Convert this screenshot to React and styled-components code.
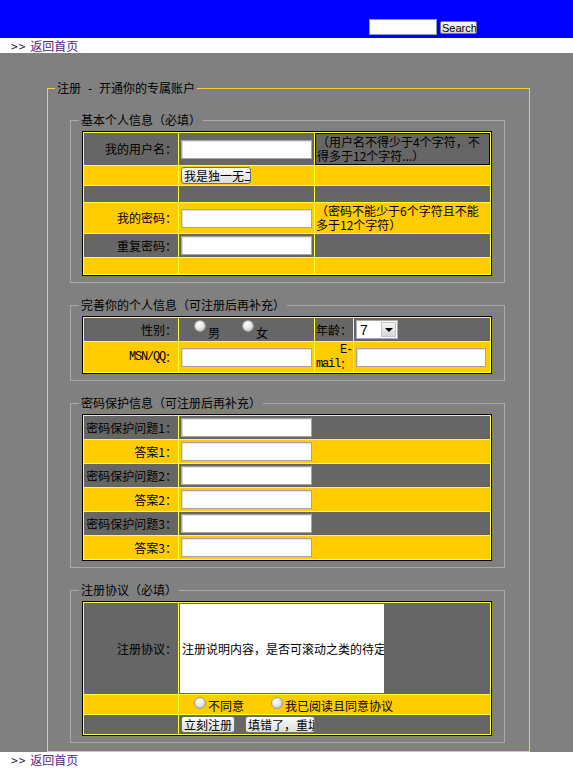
import { Fragment } from "react";
import styled, { createGlobalStyle } from "styled-components";

const GlobalStyle = createGlobalStyle`
  html, body {
    margin: 0;
    padding: 0;
    background: #fff;
  }
  body {
    font-family: "Noto Sans CJK SC", "Liberation Sans", sans-serif;
    font-size: 12px;
    line-height: 14px;
    color: #000;
  }
`;

const Header = styled.header`
  box-sizing: border-box;
  height: 38px;
  padding: 19px 96px 0 0;
  display: flex;
  justify-content: flex-end;
  align-items: flex-start;
  gap: 3px;
  background: #0000ff;
`;

const SearchInput = styled.input`
  box-sizing: border-box;
  width: 68px;
  height: 16px;
  margin: 0;
  padding: 0 2px;
  border: 1px solid #8c9cb8;
  background: #fff;
`;

const SearchButton = styled.button`
  box-sizing: border-box;
  width: 37px;
  height: 13px;
  margin: 2px 0 0;
  padding: 0 0 0 1px;
  border: 1px solid #7a7a7a;
  border-radius: 2px;
  background: linear-gradient(#fafafa, #d8d8d8);
  font: 11px/13px "Liberation Sans", Arial, sans-serif;
  color: #000;
  text-align: left;
  white-space: nowrap;
  overflow: hidden;
`;

const NavBar = styled.div`
  height: ${({ $tall }) => ($tall ? "16px" : "15px")};
  padding-left: 11px;
  display: flex;
  align-items: center;
  gap: 4px;
  background: #fff;
`;

const Arrows = styled.span`
  color: #1a1a40;
  letter-spacing: 1px;
`;

const HomeLink = styled.a`
  color: #551a8b;
  text-decoration: none;
`;

const Main = styled.main`
  padding-top: 28px;
  background: #808080;
`;

const OuterSet = styled.fieldset`
  box-sizing: border-box;
  width: 483px;
  margin: 0 0 0 47px;
  padding: 18px 24px 8px 7px;
  border: 1px solid #ffcc33;
`;

const OuterLegend = styled.legend`
  padding: 0 2px;
  line-height: 14px;
`;

const Dash = styled.span`
  display: inline-block;
  width: 18px;
  text-align: center;
`;

const Section = styled.fieldset`
  box-sizing: border-box;
  width: 435px;
  margin: 0 0 15px 15px;
  padding: 4px 0 6px 11px;
  border: 1px solid #a9a9a9;

  &:last-child {
    margin-bottom: 0;
  }
`;

const SectionLegend = styled.legend`
  margin-left: -3px;
  padding: 0 2px;
  line-height: 14px;
`;

const FormGrid = styled.div`
  box-sizing: border-box;
  width: 410px;
  display: grid;
  grid-template-columns: ${({ $cols }) => $cols};
  gap: 1px;
  padding: 1px;
  border: 1px solid #000;
  background: #ffff33;
`;

const Cell = styled.div`
  box-sizing: border-box;
  min-height: 16px;
  padding: 1px;
  display: flex;
  align-items: center;
  justify-content: ${({ $align }) => ($align === "right" ? "flex-end" : "flex-start")};
  text-align: ${({ $align }) => $align || "left"};
  background: ${({ $tone }) => ($tone === "gold" ? "#ffcc00" : "#666666")};
  ${({ $boxed }) => $boxed && "border: 1px solid #000;"}
`;

const Mono = styled.span`
  font-family: "Liberation Mono", "Courier New", monospace;
  letter-spacing: -1.2px;
  line-height: 14px;
  vertical-align: top;
`;

const TextField = styled.input`
  box-sizing: border-box;
  width: ${({ $w }) => $w || 131}px;
  height: 19px;
  margin: 1px;
  padding: 0 2px;
  border: 1px solid #a4a4a4;
  box-shadow: inset 1px 1px 0 #e2e2e2;
  background: #fff;
  font: inherit;
`;

const PushButton = styled.button`
  box-sizing: border-box;
  width: ${({ $w }) => ($w ? `${$w}px` : "auto")};
  height: 17px;
  margin: 0 1px;
  padding: 0 2px;
  border: 1px solid #6f6f6f;
  border-radius: 3px;
  background: linear-gradient(#fdfdfd, #dcdcdc);
  font: inherit;
  line-height: 15px;
  color: #000;
  text-align: left;
  white-space: nowrap;
  overflow: hidden;
`;

const ButtonRow = styled.div`
  display: flex;
  gap: 8px;
`;

const Choices = styled.div`
  display: flex;
  align-items: center;
  gap: ${({ $gap }) => $gap}px;
  padding-left: 14px;
`;

const Choice = styled.label`
  display: flex;
  align-items: center;
  gap: 2px;
`;

const Radio = styled.input.attrs({ type: "radio" })`
  appearance: none;
  box-sizing: border-box;
  width: 12px;
  height: 12px;
  margin: 0 0 ${({ $offset }) => $offset}px;
  border: 1px solid #9a9a9a;
  border-radius: 50%;
  background: radial-gradient(circle at 40% 35%, #fff 0, #ececec 40%, #b4b4b4 100%);
`;

const ChoiceText = styled.span`
  margin-top: ${({ $offset }) => $offset}px;
`;

const SelectBox = styled.div`
  box-sizing: border-box;
  width: 42px;
  height: 19px;
  margin: 1px;
  display: flex;
  align-items: center;
  border: 1px solid #a5acb2;
  background: #fff;
`;

const SelectField = styled.select`
  appearance: none;
  flex: 1;
  min-width: 0;
  height: 100%;
  padding: 0 0 0 3px;
  border: none;
  background: transparent;
  font: 14px "Liberation Sans", Arial, sans-serif;
  color: #000;
`;

const SelectArrow = styled.span`
  box-sizing: border-box;
  width: 15px;
  height: 15px;
  margin-right: 1px;
  display: flex;
  align-items: center;
  justify-content: center;
  border: 1px solid #c4c4c4;
  background: linear-gradient(#f6f6f6, #d6d6d6);

  &::after {
    content: "";
    border-left: 4px solid transparent;
    border-right: 4px solid transparent;
    border-top: 4px solid #000;
    margin-top: 1px;
  }
`;

const AgreementBox = styled.div`
  box-sizing: border-box;
  width: 204px;
  height: 89px;
  padding-left: 2px;
  display: flex;
  align-items: center;
  background: #fff;
  white-space: nowrap;
  overflow: hidden;
`;

const securityRows = [
  ["密码保护问题1：", "dark"],
  ["答案1：", "gold"],
  ["密码保护问题2：", "dark"],
  ["答案2：", "gold"],
  ["密码保护问题3：", "dark"],
  ["答案3：", "gold"],
];

function App() {
  return (
    <>
      <GlobalStyle />
      <Header>
        <SearchInput type="text" />
        <SearchButton>Search</SearchButton>
      </Header>
      <NavBar>
        <Arrows>&gt;&gt;</Arrows>
        <HomeLink href="#">返回首页</HomeLink>
      </NavBar>

      <Main>
        <OuterSet>
          <OuterLegend>
            注册<Dash>-</Dash>开通你的专属账户
          </OuterLegend>

          <Section>
            <SectionLegend>基本个人信息（必填）</SectionLegend>
            <FormGrid $cols="94px 135px 1fr">
              <Cell $align="right">我的用户名：</Cell>
              <Cell>
                <TextField type="text" />
              </Cell>
              <Cell $boxed>（用户名不得少于4个字符，不得多于12个字符...）</Cell>

              <Cell $tone="gold" />
              <Cell $tone="gold">
                <PushButton $w={70}>我是独一无二</PushButton>
              </Cell>
              <Cell $tone="gold" />

              <Cell />
              <Cell />
              <Cell />

              <Cell $tone="gold" $align="right">我的密码：</Cell>
              <Cell $tone="gold">
                <TextField type="password" />
              </Cell>
              <Cell $tone="gold">（密码不能少于6个字符且不能多于12个字符）</Cell>

              <Cell $align="right">重复密码：</Cell>
              <Cell>
                <TextField type="password" />
              </Cell>
              <Cell />

              <Cell $tone="gold" />
              <Cell $tone="gold" />
              <Cell $tone="gold" />
            </FormGrid>
          </Section>

          <Section>
            <SectionLegend>完善你的个人信息（可注册后再补充）</SectionLegend>
            <FormGrid $cols="94px 135px 38px 1fr">
              <Cell $align="right">性别：</Cell>
              <Cell>
                <Choices $gap={22}>
                  <Choice>
                    <Radio name="sex" $offset={7} />
                    <ChoiceText $offset={7}>男</ChoiceText>
                  </Choice>
                  <Choice>
                    <Radio name="sex" $offset={7} />
                    <ChoiceText $offset={7}>女</ChoiceText>
                  </Choice>
                </Choices>
              </Cell>
              <Cell>年龄：</Cell>
              <Cell>
                <SelectBox>
                  <SelectField defaultValue="7">
                    <option value="7">7</option>
                  </SelectField>
                  <SelectArrow />
                </SelectBox>
              </Cell>

              <Cell $tone="gold" $align="right">
                <span>
                  <Mono>MSN/QQ</Mono>：
                </span>
              </Cell>
              <Cell $tone="gold">
                <TextField type="text" />
              </Cell>
              <Cell $tone="gold" $align="right">
                <span>
                  <Mono>E-mail</Mono>：
                </span>
              </Cell>
              <Cell $tone="gold">
                <TextField type="text" $w={130} />
              </Cell>
            </FormGrid>
          </Section>

          <Section>
            <SectionLegend>密码保护信息（可注册后再补充）</SectionLegend>
            <FormGrid $cols="94px 1fr">
              {securityRows.map(([label, tone]) => (
                <Fragment key={label}>
                  <Cell $tone={tone} $align="right">
                    {label}
                  </Cell>
                  <Cell $tone={tone}>
                    <TextField type="text" />
                  </Cell>
                </Fragment>
              ))}
            </FormGrid>
          </Section>

          <Section>
            <SectionLegend>注册协议（必填）</SectionLegend>
            <FormGrid $cols="94px 1fr">
              <Cell $align="right">注册协议：</Cell>
              <Cell>
                <AgreementBox>注册说明内容，是否可滚动之类的待定</AgreementBox>
              </Cell>

              <Cell $tone="gold" />
              <Cell $tone="gold">
                <Choices $gap={27}>
                  <Choice>
                    <Radio name="agree" $offset={3} />
                    <ChoiceText $offset={3}>不同意</ChoiceText>
                  </Choice>
                  <Choice>
                    <Radio name="agree" $offset={3} />
                    <ChoiceText $offset={3}>我已阅读且同意协议</ChoiceText>
                  </Choice>
                </Choices>
              </Cell>

              <Cell />
              <Cell>
                <ButtonRow>
                  <PushButton>立刻注册</PushButton>
                  <PushButton $w={70}>填错了，重填</PushButton>
                </ButtonRow>
              </Cell>
            </FormGrid>
          </Section>
        </OuterSet>
      </Main>

      <NavBar $tall>
        <Arrows>&gt;&gt;</Arrows>
        <HomeLink href="#">返回首页</HomeLink>
      </NavBar>
    </>
  );
}

export default App;
